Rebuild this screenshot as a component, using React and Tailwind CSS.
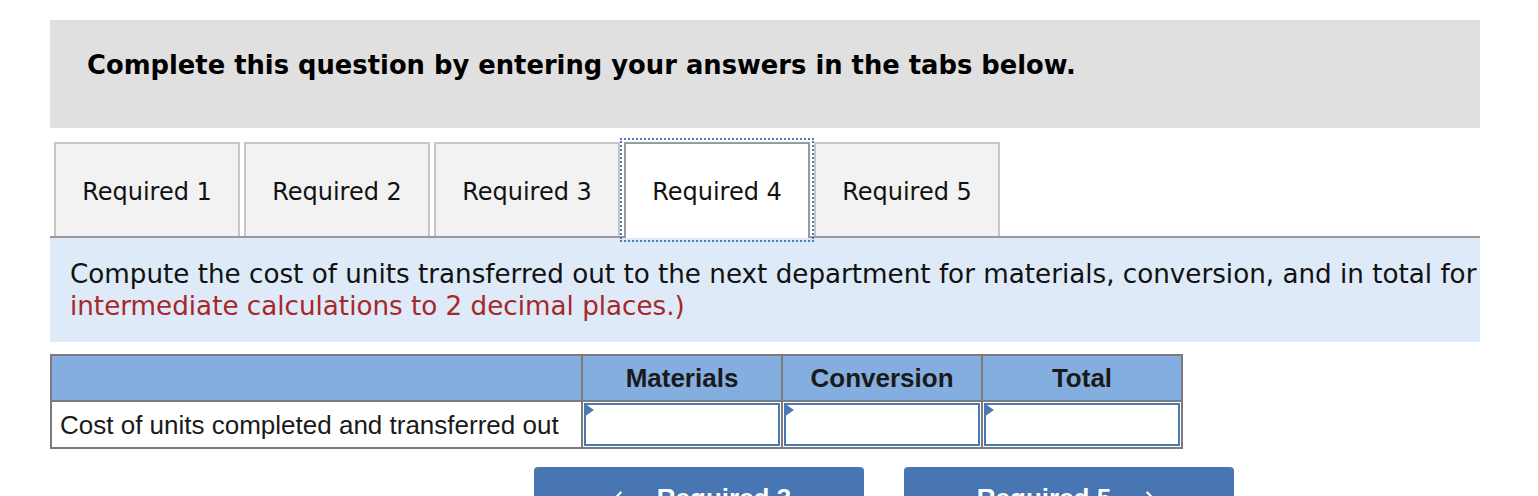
import { ChevronLeft, ChevronRight } from 'lucide-react'

const TABS = ['Required 1', 'Required 2', 'Required 3', 'Required 4', 'Required 5']
const ACTIVE = 3
const COLS = ['Materials', 'Conversion', 'Total']

function InputCell() {
  return (
    <td className="border-2 border-[#7b7b7b] p-0 h-[47px]">
      <div className="relative h-[43px] mx-px border-2 border-[#4a78b4] bg-white">
        <span className="absolute -left-[2px] -top-[2px] w-0 h-0 border-l-[10px] border-l-[#4a78b4] border-y-[7px] border-y-transparent" />
      </div>
    </td>
  )
}

export default function App() {
  return (
    <div className="bg-white min-h-screen pt-5 pl-[50px] font-['DejaVu_Sans',Verdana,sans-serif] text-[#111]">
      <div className="w-[1430px]">
        {/* instructions banner */}
        <div className="h-[108px] bg-[#e0e0e0] pl-[37px] pt-[30px]">
          <div className="text-[25.8px] font-bold leading-[30px] text-black whitespace-nowrap">
            Complete this question by entering your answers in the tabs below.
          </div>
        </div>

        {/* tabs */}
        <div className="flex items-end gap-1 pl-1 mt-[12px] h-[96px]">
          {TABS.map((t, i) =>
            i === ACTIVE ? (
              <div
                key={t}
                className="relative z-10 -mb-[2px] w-[186px] h-[96px] pt-[2px] bg-white border-2 border-b-0 border-[#999] outline-2 outline-dotted outline-[#4a7ab8] outline-offset-[2px] flex items-center justify-center text-[24px] text-[#111]"
              >
                {t}
              </div>
            ) : (
              <div
                key={t}
                className="w-[186px] h-[94px] pt-[4px] bg-[#f2f2f2] border-2 border-b-0 border-[#c6c6c6] flex items-center justify-center text-[24px] text-[#111]"
              >
                {t}
              </div>
            )
          )}
        </div>

        {/* question text */}
        <div className="border-t-2 border-[#9a9a9a] bg-[#deeaf7] pl-5 py-5 overflow-hidden whitespace-nowrap text-[26.2px] leading-8">
          <div className="text-[#111]">
            Compute the cost of units transferred out to the next department for materials, conversion, and in total for
          </div>
          <div className="text-[#a8272b]">intermediate calculations to 2 decimal places.)</div>
        </div>

        {/* answer table */}
        <table className="mt-3 border-collapse border-2 border-[#7b7b7b] font-['Liberation_Sans',Arial,sans-serif] text-[26px] text-[#1a1a1a]">
          <thead>
            <tr className="bg-[#83aedf] h-[46px]">
              <th className="w-[531px] border-2 border-[#7b7b7b]" />
              {COLS.map((c) => (
                <th key={c} className="w-[200px] border-2 border-[#7b7b7b] font-bold text-center leading-7">
                  {c}
                </th>
              ))}
            </tr>
          </thead>
          <tbody>
            <tr>
              <td className="border-2 border-[#7b7b7b] px-2 text-left leading-7 whitespace-nowrap">
                Cost of units completed and transferred out
              </td>
              <InputCell />
              <InputCell />
              <InputCell />
            </tr>
          </tbody>
        </table>

        {/* navigation */}
        <div className="flex gap-10 mt-[18px] ml-[484px] font-['Liberation_Sans',Arial,sans-serif]">
          <button className="w-[330px] h-[62px] rounded-[4px] bg-[#4776b3] text-white text-[26px] font-bold flex items-center justify-center gap-7">
            <ChevronLeft size={22} strokeWidth={2.5} />
            <span>Required 3</span>
          </button>
          <button className="w-[330px] h-[62px] rounded-[4px] bg-[#4776b3] text-white text-[26px] font-bold flex items-center justify-center gap-7">
            <span>Required 5</span>
            <ChevronRight size={22} strokeWidth={2.5} />
          </button>
        </div>
      </div>
    </div>
  )
}
